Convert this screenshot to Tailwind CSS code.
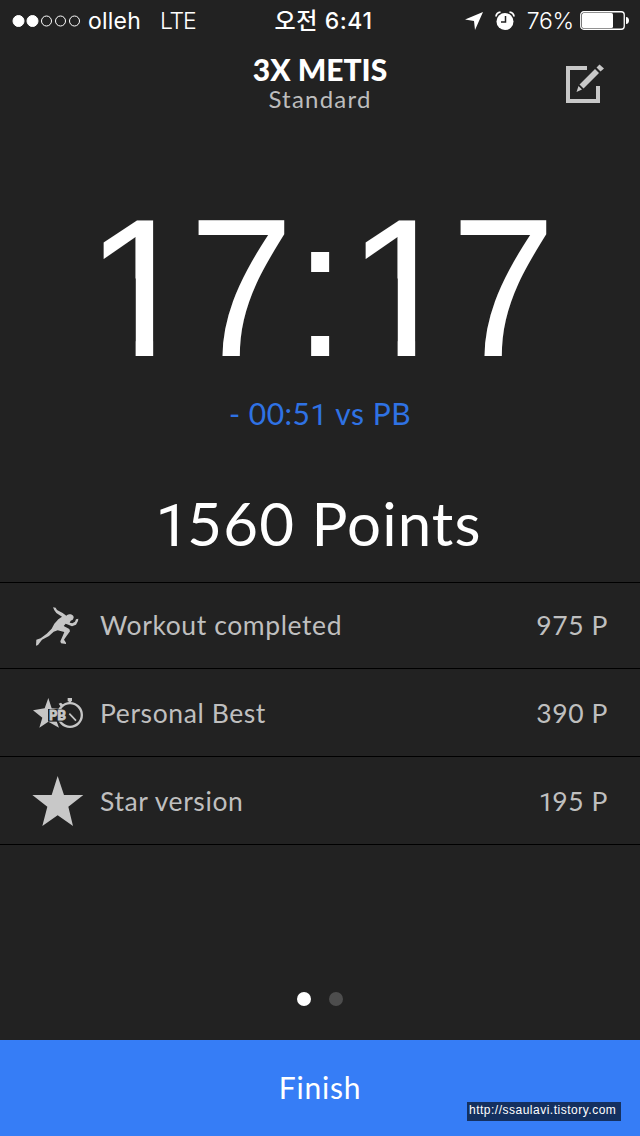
<!DOCTYPE html>
<html lang="ko">
<head>
    <meta charset="UTF-8">
    <meta name="viewport" content="width=device-width, initial-scale=1.0">
    <title>3X METIS</title>
    <script src="https://cdn.jsdelivr.net/npm/@tailwindcss/browser@4"></script>
</head>
<body class="bg-[#222222]">

<div class="relative flex flex-col w-[640px] h-[1136px] overflow-hidden bg-[#222222] text-white font-['Lato',sans-serif] whitespace-nowrap">

    <!-- Status bar -->
    <div class="grid grid-cols-3 h-10 items-center font-['Inter','Noto_Sans_CJK_KR',sans-serif] text-[23px] leading-10">
        <div class="flex items-center pl-[12px]">
            <svg class="w-[70px] h-[14px]" viewBox="0 0 70 14" fill="none" stroke="#fff">
                <circle cx="6.5" cy="7" r="5.5" fill="#fff"/>
                <circle cx="20.5" cy="7" r="5.5" fill="#fff"/>
                <circle cx="34.5" cy="7" r="5"/>
                <circle cx="48.5" cy="7" r="5"/>
                <circle cx="62.5" cy="7" r="5"/>
            </svg>
            <span class="ml-[6px] pt-px tracking-[0.2px]">olleh</span>
            <span class="ml-[19px] pt-px font-light tracking-[-1.2px]">LTE</span>
        </div>
        <div class="text-center font-medium pl-[7px] pt-px tracking-[0.6px]">오전 6:41</div>
        <div class="flex items-center justify-end pr-[11px]">
            <svg class="w-[18px] h-[18px] mr-[12px]" viewBox="0 0 18 18" fill="#fff">
                <path d="M18 0L10 18L9 9L0 7.5Z"/>
            </svg>
            <svg class="w-[20px] h-[20px] mr-[12px]" viewBox="0 0 20 20" fill="none">
                <circle cx="10" cy="10.5" r="8.5" fill="#fff"/>
                <path d="M1 5.5A5 5 0 0 1 5.5 1.2M19 5.5A5 5 0 0 0 14.5 1.2" stroke="#fff" stroke-width="1.8"/>
                <path d="M10.5 5V11H6" stroke="#222" stroke-width="1.5"/>
            </svg>
            <span class="tracking-[-0.2px] mr-[6px] pt-px font-light">76%</span>
            <svg class="w-[49px] h-[19px]" viewBox="0 0 49 19">
                <rect x="0.75" y="0.75" width="43.5" height="17.5" rx="3" fill="none" stroke="#fff" stroke-width="1.3"/>
                <rect x="2" y="2" width="31" height="15" rx="1.5" fill="#fff"/>
                <path d="M46 6C50 6 50 13 46 13Z" fill="#fff"/>
            </svg>
        </div>
    </div>

    <!-- Header -->
    <div class="grid grid-cols-[1fr_auto_1fr] h-[80px]">
        <div></div>
        <div class="flex flex-col items-center pt-[14px]">
            <h1 class="text-[30px] leading-[30px] font-black">3X METIS</h1>
            <p class="text-[24px] leading-[30px] text-[#bdbdbd] tracking-[1.2px]">Standard</p>
        </div>
        <div class="flex justify-end pt-[24px] pr-[35px]">
            <svg class="w-[40px] h-[40px]" viewBox="0 0 40 40" fill="#c8c8c8">
                <path d="M22 2H1V39H35V22H31V35H5V6H22Z"/>
                <path d="M30 5L34 9L18.5 24.5L14.5 20.5ZM31.5 3.5L34.5 0.5L39 4.5L35.5 7.5ZM13.5 22L17 25.5L11.5 28Z"/>
            </svg>
        </div>
    </div>

    <!-- Time: the ones are cut at the stem so they have no foot -->
    <div class="flex justify-center h-[260px] pt-[57px] font-['Liberation_Sans',sans-serif] text-[196px] leading-[224px]">
        <span class="w-[105px] origin-left scale-x-[1.045] [clip-path:polygon(0_0,66.2px_0,66.2px_100%,49.4px_100%,49.4px_50%,0_50%)]">1</span>
        <span class="w-[105px] origin-left scale-x-[0.96]">7</span>
        <span class="w-[52px] origin-left scale-x-[0.96]">:</span>
        <span class="w-[105px] origin-left scale-x-[1.045] [clip-path:polygon(0_0,66.2px_0,66.2px_100%,49.4px_100%,49.4px_50%,0_50%)]">1</span>
        <span class="w-[105px] origin-left scale-x-[0.96]">7</span>
    </div>

    <p class="h-[100px] pt-[13px] text-center text-[30px] leading-[40px] tracking-[0.5px] text-[#2f72e4]">- 00:5<span class="font-['Roboto']">1</span> vs PB</p>
    <p class="h-[102px] pt-[7px] pl-[3px] text-center text-[60px] leading-[72px] tracking-[1.1px]"><span class="font-['Roboto'] -ml-[6px] -mr-[3px]">1</span>560 Points</p>

    <!-- Points -->
    <div class="border-y border-black text-[26.5px] tracking-[0.6px] text-[#bfbfbf] divide-y divide-black">
        <div class="flex items-center h-[86px] pl-5 pr-[32px]">
            <svg class="w-20 h-20 mt-2" viewBox="0 0 240 240" fill="#c6c6c6">
                <path d="M99 52L107 53L111 60L128 69L139 77Q143 71 152 73Q161 75 161 83Q160 90 152 92L149 98L157 100L165 95L168 88L175 86L174 93L168 104L156 109L145 104L137 101L131 108L148 117L150 124L138 140L132 149L138 158V162L123 160L121 154L129 136L133 126L113 121L101 125L87 138L66 149L54 165L48 167L49 149L62 145L80 131L95 116L103 101L115 88L126 80L109 69L103 61Z"/>
            </svg>
            <span class="flex-1">Workout completed</span>
            <span>975 P</span>
        </div>
        <div class="flex items-center h-[88px] pl-5 pr-[32px]">
            <svg class="w-20 h-20 mt-3 -mb-0.5" viewBox="0 0 240 240">
                <path d="M85 54L95 85L125 87L104 108L117 143L85 125L58 143L67 113L39 91L74 85Z" fill="#c6c6c6"/>
                <circle cx="150" cy="105" r="35.5" fill="#222" stroke="#c6c6c6" stroke-width="7"/>
                <path d="M143 54H156V64H153V72H146V64H143ZM116 71L123 68L130 75L126 80L121 78Z" fill="#c6c6c6"/>
                <path d="M148 101L168 122" stroke="#c6c6c6" stroke-width="5"/>
                <rect x="84" y="87" width="57" height="38" fill="#222"/>
                <text x="87" y="120" font-family="Lato" font-size="39" font-weight="900" letter-spacing="0" fill="#c6c6c6" stroke="#c6c6c6" stroke-width="2.5">PB</text>
            </svg>
            <span class="flex-1 pt-0.5">Personal Best</span>
            <span class="pt-0.5">390 P</span>
        </div>
        <div class="flex items-center h-[87px] pl-5 pr-[32px]">
            <svg class="w-20 h-20 -mt-1" viewBox="0 0 240 240" fill="#c8c8c8">
                <path d="M113 51L132 108L190 108L145 143L159 201L113 169L67 201L82 143L37 108L95 108Z"/>
            </svg>
            <span class="flex-1 pt-0.5">Star version</span>
            <span class="pt-0.5"><span class="font-['Roboto'] -mr-[2px]">1</span>95 P</span>
        </div>
    </div>

    <!-- Page dots -->
    <div class="flex justify-center gap-[18px] mt-auto mb-[34px]">
        <span class="size-[14px] rounded-full bg-white"></span>
        <span class="size-[14px] rounded-full bg-[#4d4d4d]"></span>
    </div>

    <button class="h-24 shrink-0 pb-0.5 bg-[#367df6] text-[30px] leading-[40px] tracking-[0.8px]">Finish</button>

    <span class="absolute left-[467px] top-[1102px] w-[154px] h-[19px] pl-[2px] bg-[#14305f] font-['Liberation_Sans',sans-serif] text-[12px] leading-[17px] tracking-[0.5px]">http://ssaulavi.tistory.com</span>
</div>

</body>
</html>
